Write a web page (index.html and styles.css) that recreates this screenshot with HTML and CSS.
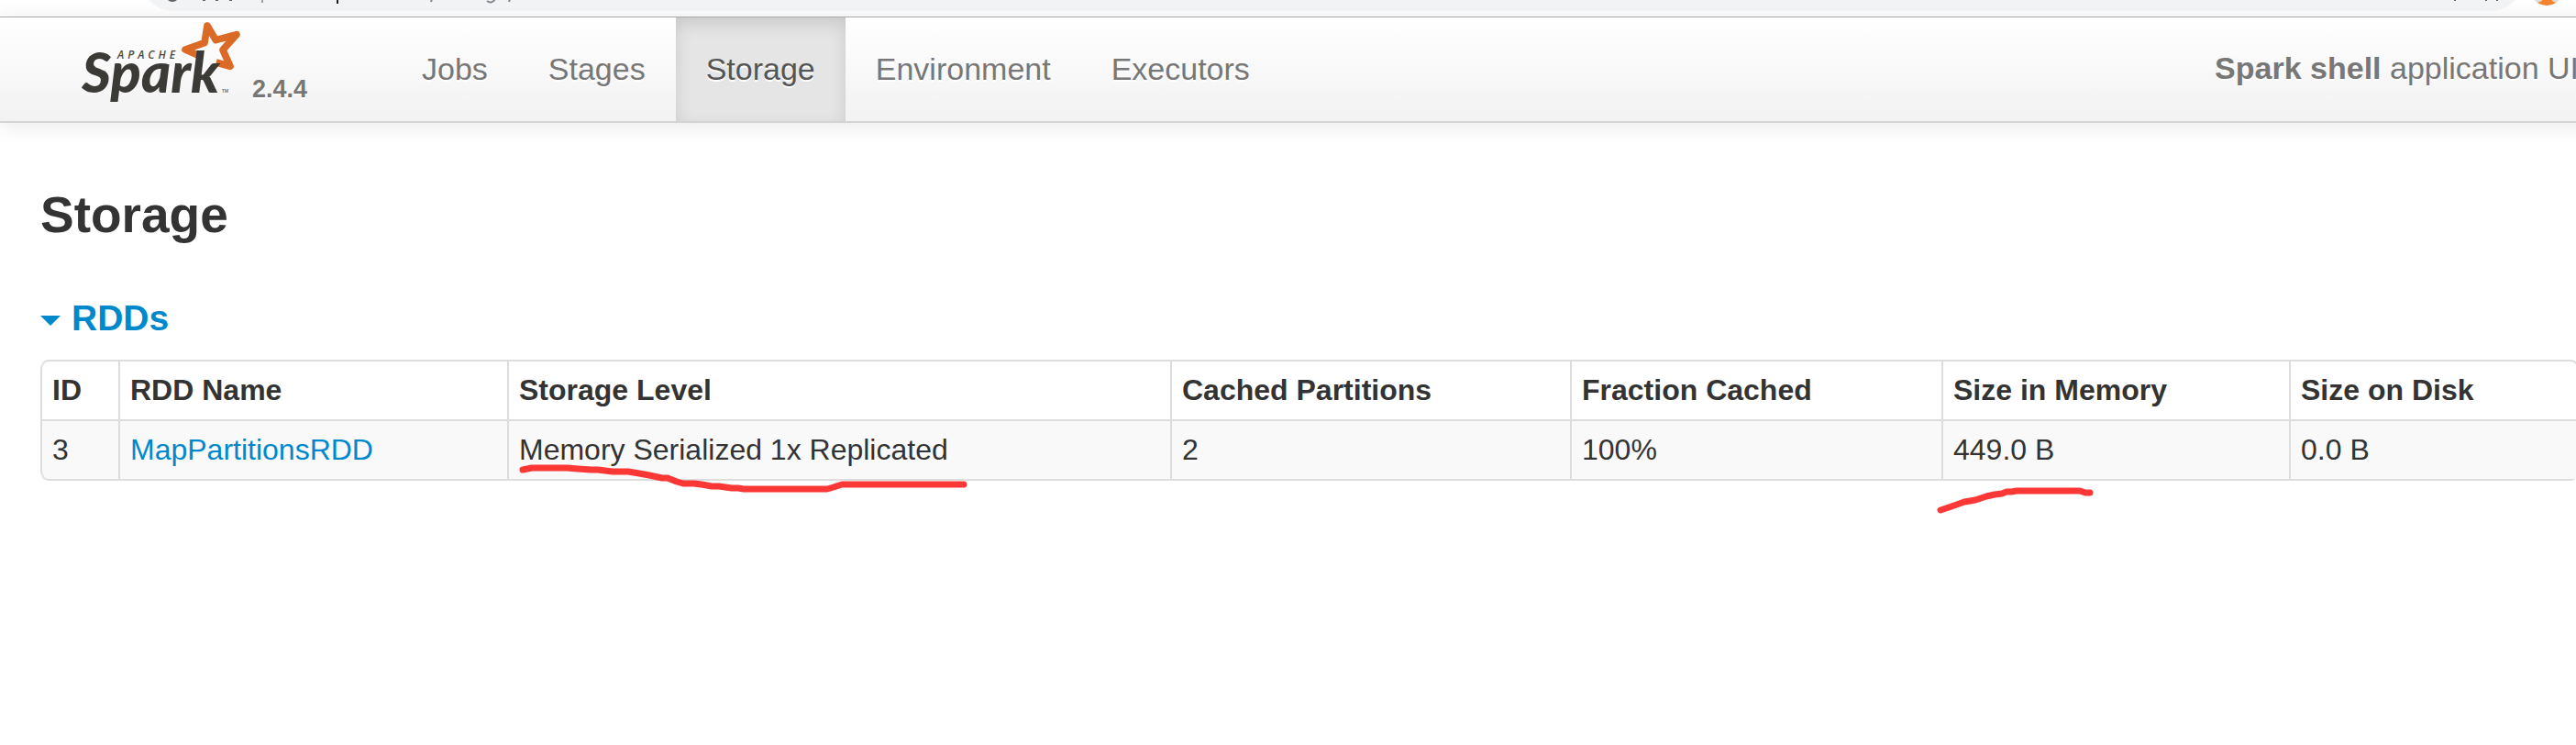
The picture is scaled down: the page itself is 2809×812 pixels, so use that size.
FILE: index.html
```html
<!DOCTYPE html>
<html lang="en">
<head>
<meta charset="utf-8">
<title>Spark shell - Storage</title>
<link rel="stylesheet" href="styles.css">
</head>
<body>
<div class="browser-bar">
  <div class="address">
    <svg class="address-marks" width="420" height="12" viewBox="156 0 420 12" aria-hidden="true">
      <path d="M183 0h10q-2 2-5 2t-5-2z" fill="#5f6368"/>
      <path d="M221 0h3v1h-3zM235 0h3v1h-3zM250 0h3v1h-3z" fill="#5f6368"/>
      <path d="M285 0h2v3h-2z" fill="#9aa0a6"/>
      <path d="M367 0h2v4h-2z" fill="#202124"/>
      <path d="M470 2l1-3M531 1q5 4 9-2M555 2l1-3" fill="none" stroke="#80868b" stroke-width="2"/>
    </svg>
    <svg class="address-marks" width="80" height="12" viewBox="2669 0 80 12" aria-hidden="true">
      <path d="M2676 0h2v1h-2zM2710 0h2v1h-2zM2722 0h2v1h-2z" fill="#5f6368"/>
    </svg>
  </div>
  <svg class="avatar" width="36" height="36" viewBox="0 0 36 36" aria-hidden="true">
    <circle cx="18" cy="18" r="18" fill="#dcdcdc"/>
    <path d="M13 24h10l1 7 4 2q-10 6-20 0l5-2z" fill="#f5832a"/>
    <path d="M13 24h2v6h-2z" fill="#8a6a50"/>
  </svg>
</div>

<div class="page">
  <header class="navbar">
    <a class="brand" href="#">
      <svg class="logo" width="173" height="92" viewBox="90 36 519 276" role="img" aria-label="Apache Spark">
        <path d="M472 152L426 132L489 110L498 54L526 101L594 83L549 133L573 187L527 174" fill="none" stroke="#db6a27" stroke-width="23" stroke-linejoin="round"/>
        <text class="logo-apache" x="204" y="162">APACHE</text>
        <text class="logo-name" x="88" y="272">Spark</text>
        <text class="logo-tm" x="546" y="272">TM</text>
      </svg>
      <span class="version">2.4.4</span>
    </a>
    <nav class="tabs">
      <a class="tab" href="#jobs">Jobs</a>
      <a class="tab" href="#stages">Stages</a>
      <a class="tab tab-active" href="#storage" aria-current="page">Storage</a>
      <a class="tab" href="#environment">Environment</a>
      <a class="tab" href="#executors">Executors</a>
    </nav>
    <p class="app-name"><strong>Spark shell</strong> application UI</p>
  </header>

  <main class="content">
    <h1 class="title">Storage</h1>
    <h2 class="section-title">
      <a class="section-toggle" href="#rdds">
        <svg class="caret" width="22" height="11" viewBox="0 0 22 11" aria-hidden="true"><path d="M0 0h22L11 11z" fill="#08c"/></svg>
        <span>RDDs</span>
      </a>
    </h2>
    <div class="table-area">
      <table class="rdds" id="rdds">
        <colgroup>
          <col class="col-id"><col class="col-name"><col class="col-level"><col class="col-parts"><col class="col-fraction"><col class="col-memory"><col>
        </colgroup>
        <thead>
          <tr>
            <th scope="col">ID</th>
            <th scope="col">RDD Name</th>
            <th scope="col">Storage Level</th>
            <th scope="col">Cached Partitions</th>
            <th scope="col">Fraction Cached</th>
            <th scope="col">Size in Memory</th>
            <th scope="col">Size on Disk</th>
          </tr>
        </thead>
        <tbody>
          <tr>
            <td>3</td>
            <td><a class="rdd-link" href="#rdd-3">MapPartitionsRDD</a></td>
            <td>Memory Serialized 1x Replicated</td>
            <td>2</td>
            <td>100%</td>
            <td>449.0 B</td>
            <td>0.0 B</td>
          </tr>
        </tbody>
      </table>
      <svg class="marks" width="2400" height="200" viewBox="44 393 2400 200" aria-hidden="true">
        <path d="M570 513L580 511H618L630 512L645 513H652L668 515H685L697 517L708 519L722 522H728L738 526L745 528H757L765 529L776 531H784L798 533H805L811 534H902L909 532L918 529H1051"/>
        <path d="M2116 557L2128 553L2142 548L2154 546L2166 542L2175 540L2183 539L2188 537H2193L2199 536H2268L2274 538H2279"/>
      </svg>
    </div>
  </main>
</div>
</body>
</html>
```
FILE: styles.css
```css
* {
  box-sizing: border-box;
}

body {
  min-height: 100vh;
  margin: 0;
  overflow-x: hidden;
  background: #fff;
  color: #333;
  font-family: "Liberation Sans", Arial, sans-serif;
  font-size: 32px;
  line-height: 45px;
}

a {
  text-decoration: none;
}

/* Browser toolbar, only its lower edge is in view */
.browser-bar {
  display: flex;
  align-items: flex-start;
  gap: 10px;
  height: 19px;
  padding: 0 14px 0 156px;
  overflow: hidden;
  border-bottom: 1px solid #b0b0b0;
}

.address {
  display: flex;
  flex: 1;
  align-items: flex-end;
  justify-content: space-between;
  height: 63px;
  margin-top: -51px;
  border-radius: 32px;
  background: #f1f3f4;
}

.avatar {
  flex: none;
  margin-top: -30px;
}

/* The page is a little wider than the window */
.page {
  margin-right: -48px;
}

.navbar {
  display: flex;
  align-items: flex-start;
  padding: 0 45px 0 90px;
  border-bottom: 2px solid #d4d4d4;
  background: linear-gradient(#fff, #f2f2f2);
  box-shadow: 0 2px 22px rgba(0, 0, 0, 0.1);
  color: #777;
  font-size: 34px;
  text-shadow: 0 2px 0 #fff;
}

.brand {
  display: flex;
  align-items: flex-end;
  gap: 12px;
  width: 337px;
  height: 101px;
  color: #777;
}

.logo {
  margin-bottom: 6px;
  overflow: visible;
  text-shadow: none;
}

.logo-name {
  fill: #3c3a37;
  font: italic 900 184px Lato, sans-serif;
}

.logo-apache {
  fill: #4a4845;
  font: italic 600 36px "Open Sans", sans-serif;
  letter-spacing: 12px;
}

.logo-tm {
  fill: #777;
  font: 700 14px "Open Sans", sans-serif;
}

.version {
  font-size: 27px;
  font-weight: 700;
}

.tabs {
  display: flex;
}

.tab {
  padding: 34px 33px;
  color: #777;
}

.tab-active {
  background: #e5e5e5;
  box-shadow: inset 0 7px 18px rgba(0, 0, 0, 0.125);
  color: #555;
}

.app-name {
  margin: 33px 0 0 auto;
  white-space: nowrap;
}

.content {
  padding: 55px 45px 0 44px;
}

.title {
  margin: 0;
  font-size: 55px;
  line-height: 90px;
}

.section-title {
  margin: 45px 0 23px;
  font-size: 39px;
  line-height: 45px;
}

.section-toggle {
  display: flex;
  align-items: center;
  gap: 12px;
  color: #08c;
}

.caret {
  margin-top: 6px;
}

.table-area {
  position: relative;
}

.rdds {
  width: 100%;
  table-layout: fixed;
  border: 2px solid #ddd;
  border-left: 0;
  border-radius: 9px;
  border-spacing: 0;
}

.col-id { width: 85px; }
.col-name { width: 424px; }
.col-level { width: 723px; }
.col-parts { width: 436px; }
.col-fraction { width: 405px; }
.col-memory { width: 379px; }

.rdds th,
.rdds td {
  padding: 9px 11px;
  border-left: 2px solid #ddd;
  text-align: left;
}

.rdds td {
  border-top: 2px solid #ddd;
  background: #f9f9f9;
}

.rdds th:first-child {
  border-top-left-radius: 9px;
}

.rdds td:first-child {
  border-bottom-left-radius: 9px;
}

.rdd-link {
  color: #08c;
}

/* Red pen strokes drawn over the table */
.marks {
  position: absolute;
  top: 0;
  left: 0;
  pointer-events: none;
}

.marks path {
  fill: none;
  stroke: #fb3836;
  stroke-width: 7px;
  stroke-linecap: round;
  stroke-linejoin: round;
}
```
